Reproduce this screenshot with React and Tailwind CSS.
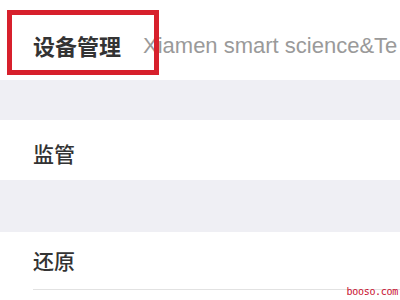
import React from 'react';

const cjk = { fontFamily: '"Noto Sans CJK SC", "Noto Sans", sans-serif' };

function Row({ label, className = '' }) {
  return (
    <div className={`flex items-center bg-white pl-[33px] pt-[8px] ${className}`}>
      <span className="text-[21px] font-medium text-[#333333]">{label}</span>
    </div>
  );
}

export default function App() {
  return (
    <div className="relative w-[400px] h-[300px] overflow-hidden bg-[#efeff4]" style={cjk}>
      {/* header row with company name */}
      <div className="relative flex h-[80px] items-center gap-[22px] overflow-hidden whitespace-nowrap bg-white pl-[33px] pt-[10px]">
        <span className="text-[22px] font-bold text-[#333333]">设备管理</span>
        <span className="text-[22px] text-[#9a9a9a]" style={{ fontFamily: '"Liberation Sans", Arial, sans-serif' }}>
          Xiamen smart science&amp;Te
        </span>
        {/* red annotation box */}
        <div className="absolute left-[7px] top-[10px] h-[65px] w-[152px] border-[5px] border-[#d7202c]" />
      </div>

      <div className="h-[40px]" />
      <Row label="监管" className="h-[60px]" />
      <div className="h-[52px]" />

      <div className="flex h-[68px] flex-col bg-white">
        <div className="flex flex-1 items-center pl-[33px]">
          <span className="text-[21px] font-medium text-[#333333]">还原</span>
        </div>
        <div className="ml-[33px] mb-[10px] h-px bg-[#e2e2e2]" />
      </div>

      <span
        className="absolute bottom-[1px] right-[2px] text-[10px] tracking-[-0.3px] text-[#c8102e]"
        style={{ fontFamily: '"DejaVu Sans Mono", monospace' }}
      >
        booso.com
      </span>
    </div>
  );
}
